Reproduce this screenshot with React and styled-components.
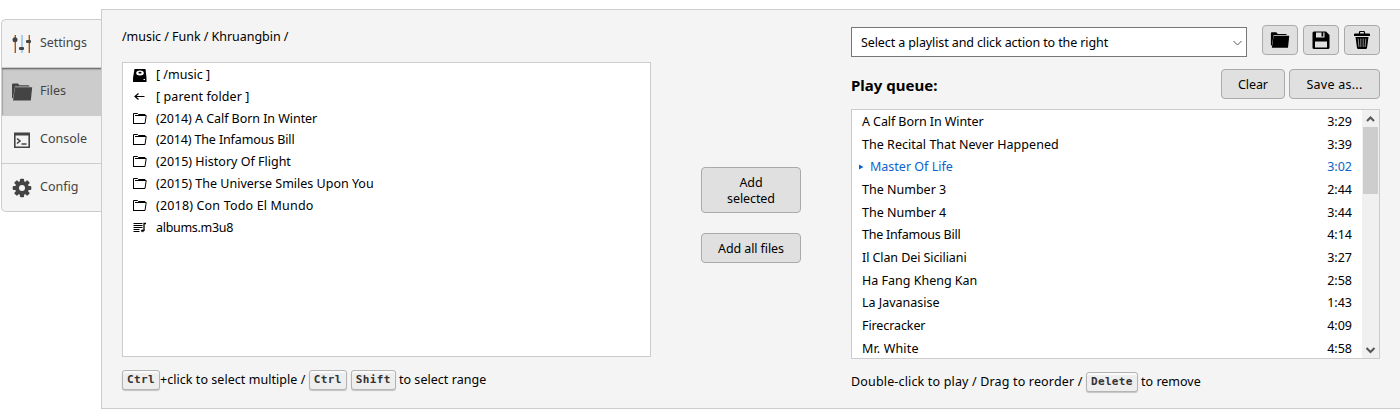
import React from "react";
import styled, { createGlobalStyle } from "styled-components";

const Global = createGlobalStyle`
  * { box-sizing: border-box; }
  body { margin: 0; background: #fff; color: #000; font: 12.5px/20px "Noto Sans", sans-serif; overflow: hidden; }
  svg { display: block; flex: none; }
`;
const Page = styled.div`display: flex; width: 1400px; height: 420px; padding: 9px 0 0 1px; overflow: hidden;`;
const Tabs = styled.nav`
  flex: none; width: 100px; height: 193px; margin-top: 10px;
  border: 1px solid #ccc; border-right: 0; border-radius: 5px 0 0 5px; background: #f4f4f4;
`;
const Tab = styled.div`
  display: flex; align-items: center; height: 48px; padding: 0 0 1px 9px; color: #444;
  border-bottom: 1px solid ${p => (p.$last ? "transparent" : "#ccc")};
  ${p => p.$active && "background: #ccc; box-shadow: inset 1px 2px 2px -1px #555;"}
  svg { margin-top: 2px; }
  span { margin-left: 7px; letter-spacing: ${p => p.$ls || 0}px; }
`;
const Panel = styled.main`
  flex: none; width: 1310px; height: 400px; border: 1px solid #ccc; background: #f4f4f4;
  display: flex; align-items: flex-start; padding-left: 20px;
`;
const Files = styled.section`width: 529px; padding-top: 17px;`;
const Crumbs = styled.div`height: 20px; letter-spacing: -0.04px;`;
const FileList = styled.div`height: 295px; margin-top: 15px; border: 1px solid #ccc; background: #fff; padding: 1px 0 0 9px;`;
const FileRow = styled.div`
  display: flex; align-items: center; height: 21.85px;
  span { margin-left: 8px; letter-spacing: ${p => p.$ls || 0}px; }
`;
const Hint = styled.div`display: flex; align-items: center; margin-top: 13px; height: 20px; white-space: pre;`;
const HintText = styled.span`margin-top: -1px; letter-spacing: ${p => p.$ls || 0}px;`;
const Kbd = styled.kbd`
  height: 20px; padding: 0 4px; margin-right: ${p => p.$gap || 0}px;
  border: 1px solid #b4b4b4; border-radius: 3px; background: #eee; color: #333;
  box-shadow: 0 1px 1px rgba(0,0,0,.2), inset 0 2px 0 rgba(255,255,255,.7);
  font: bold 11px/18px "DejaVu Sans Mono", monospace; letter-spacing: 0.36px;
`;
const Actions = styled.section`
  width: 100px; margin: 157px 50px 0; display: flex; flex-direction: column; gap: 20px;
`;
const Button = styled.button`
  display: flex; align-items: center; justify-content: center; flex: none;
  width: ${p => p.$w}px; height: ${p => p.$h || 30}px; padding: 2px 0 0;
  border: 1px solid #aaa; border-radius: 4px; background: #e0e0e0; color: #000;
  font: 12.5px/16px "Noto Sans", sans-serif; letter-spacing: ${p => p.$ls || 0}px;
  svg { margin-top: -2px; }
`;
const Queue = styled.section`width: 529px; padding-top: 15px;`;
const Row = styled.div`display: flex;`;
const Select = styled.div`
  display: flex; align-items: center; justify-content: space-between; width: 396px; height: 30px; margin: 2px 15px 0 0;
  border: 1px solid #777; background: #fff; padding: 0 3px 0 9px;
  span { margin-top: 2px; letter-spacing: -0.11px; }
`;
const Tools = styled.div`display: flex; gap: ${p => p.$gap}px;`;
const Head = styled.div`display: flex; justify-content: space-between; margin-top: 12px;`;
const Title = styled.h2`margin: 6px 0 0; font: bold 15px/20px "Noto Sans", sans-serif;`;
const QueueBox = styled.div`display: flex; height: 250px; margin-top: 10px; border: 1px solid #ccc; background: #fff; overflow: hidden;`;
const Tracks = styled.div`flex: 1; padding-top: 0.6px;`;
const Track = styled.div`
  display: flex; align-items: center; height: 22.7px; padding: 0 10px 0 ${p => (p.$on ? 7 : 10)}px;
  color: ${p => (p.$on ? "#0b63ce" : "#000")};
  span { flex: 1; letter-spacing: ${p => p.$ls || 0}px; }
  svg { margin-right: 6px; }
`;
const Scroll = styled.div`
  width: 17px; background: #f0f0f0; display: flex; flex-direction: column; align-items: center; justify-content: space-between;
`;
const ScrollTop = styled.div`display: flex; flex-direction: column; align-items: center;`;
const Thumb = styled.div`width: 15px; height: 67px; background: #cdcdcd;`;

const Sliders = () => (
  <svg width="22" height="22" viewBox="0 0 22 22">
    <path d="M3 2h1v18H3zM17 2h1v18h-1z" fill="#e0b48f" /><path d="M10 2h2v18h-2z" fill="#a9cbec" />
    <path d="M4 2h1v18H4zM18 2h1v18h-1z" fill="#666" />
    <g fill="#444"><circle cx="4" cy="6.800" r="2.500" /><rect x="8" y="14" width="5" height="3" rx="1" /><rect x="15" y="7" width="5" height="3" rx="1" /></g>
  </svg>
);
const Folder = ({ c = "#000", w = 22 }) => (
  <svg width={w} height={w} viewBox="0 0 22 22" fill={c}>
    <path d="M1 17V3.500Q1 2.500 2 2.500H7l1.500 1.800h8.500Q18.500 4.300 18.500 5.500H4L2 17z" /><path d="M4 6.200H21.200L19.800 19.500H2z" />
  </svg>
);
const Console = () => (
  <svg width="22" height="22" viewBox="0 0 22 22" fill="none" stroke="#444">
    <path d="M3.800 4v14.300h14.400V4" strokeWidth="1.600" /><path d="M3 5h16" strokeWidth="3" />
    <path d="M6 9.500l3 2.500-3 2.500M10.500 15h5" strokeWidth="1.600" />
  </svg>
);
const Gear = () => (
  <svg width="22" height="22" viewBox="-11 -11 22 22">
    <g fill="#444">{[0, 45, 90, 135].map(a => <rect key={a} x="-2.100" y="-9.300" width="4.200" height="18.600" rx="1" transform={`rotate(${a})`} />)}</g>
    <circle r="5" fill="none" stroke="#444" strokeWidth="3.800" /><circle r="3" fill="#f4f4f4" />
  </svg>
);
const Disk = () => (
  <svg width="16" height="16" viewBox="0 0 16 16"><path d="M2.500 2h11l1 9v4H1v-4z" /><ellipse cx="8" cy="6" rx="3.800" ry="2.500" fill="#fff" /><ellipse cx="8" cy="5.700" rx="1.600" ry=".9" /><path d="M11.500 12.500h1.500" stroke="#fff" /></svg>
);
const Back = () => (
  <svg width="16" height="16" viewBox="0 0 16 16" fill="none" stroke="#000" strokeWidth="1.200"><path d="M3 7.500h9.500M6.500 4.500l-3.500 3 3.500 3" /></svg>
);
const Open = () => (
  <svg width="16" height="16" viewBox="0 0 16 16" fill="none" stroke="#000"><path d="M1.500 13V2.500H5.500L6.500 3.500h6.500V5M1.500 12.500h11.500l1.200-8H3" /></svg>
);
const ListIcon = () => (
  <svg width="16" height="16" viewBox="0 0 16 16" fill="none" stroke="#000"><path d="M1.500 3.500h9M1.500 5.500h9M1.500 7.500h9M1.500 9.500h6M1.500 11.500h6" /><path d="M14 3.500h-2v7.500" strokeWidth="1.300" /><ellipse cx="10.500" cy="10.800" rx="1.300" ry="1" fill="#000" strokeWidth=".5" /></svg>
);
const Save = () => (
  <svg width="20" height="20" viewBox="0 0 20 20"><path d="M1.500 3Q1.500 1.500 3 1.500H15L18.500 5v12.500q0 1.500-1.500 1.500H3q-1.500 0-1.500-1.500z" /><path d="M5 2.500h8.500v5H5zM4 11.500H16v6H4z" fill="#e0e0e0" /><path d="M10.500 2h1.800v4.500h-1.800z" /></svg>
);
const Trash = () => (
  <svg width="20" height="20" viewBox="0 0 20 20"><path d="M2 4.500q0-1 1-1h14q1 0 1 1V6H2zM3.500 7h13l-1.500 11q-.2 1-1.200 1H6.200q-1 0-1.200-1z" /><path d="M7.500 4V2.300q0-.8.800-.8h3.400q.8 0 .8.800V4" fill="none" stroke="#000" strokeWidth="1.200" /><path d="M6.200 8.500l.7 8.500M8.800 8.500V17M11.200 8.500V17M13.800 8.500L13.100 17" stroke="#999" strokeWidth=".9" /></svg>
);
const Chevron = ({ up, w = 1, c = "#555" }) => (
  <svg width="11" height="17" viewBox="0 0 11 17" fill="none" stroke={c} strokeWidth={w}><path d={up ? "M2 11L5.500 7.500 9 11" : "M1.500 7L5.500 11 9.500 7"} /></svg>
);

const files = [
  [Disk, "[ /music ]"], [Back, "[ parent folder ]", 0.1], [Open, "(2014) A Calf Born In Winter", -0.05], [Open, "(2014) The Infamous Bill", -0.13],
  [Open, "(2015) History Of Flight"], [Open, "(2015) The Universe Smiles Upon You"], [Open, "(2018) Con Todo El Mundo", 0.17], [ListIcon, "albums.m3u8", -0.3],
];
const tracks = [
  ["A Calf Born In Winter", "3:29", -0.08], ["The Recital That Never Happened", "3:39", 0.03], ["Master Of Life", "3:02"], ["The Number 3", "2:44"],
  ["The Number 4", "3:44"], ["The Infamous Bill", "4:14", -0.22], ["Il Clan Dei Siciliani", "3:27", -0.08], ["Ha Fang Kheng Kan", "2:58"],
  ["La Javanasise", "1:43"], ["Firecracker", "4:09", -0.1], ["Mr. White", "4:58", 0.15],
];

export default function App() {
  return (
    <>
      <Global />
      <Page>
        <Tabs>
          <Tab $ls={-0.1}><Sliders /><span>Settings</span></Tab>
          <Tab $active><Folder c="#444" /><span>Files</span></Tab>
          <Tab><Console /><span>Console</span></Tab>
          <Tab $last><Gear /><span>Config</span></Tab>
        </Tabs>
        <Panel>
          <Files>
            <Crumbs>/music / Funk / Khruangbin /</Crumbs>
            <FileList>
              {files.map(([Icon, name, ls]) => <FileRow key={name} $ls={ls}><Icon /><span>{name}</span></FileRow>)}
            </FileList>
            <Hint>
              <Kbd>Ctrl</Kbd><HintText $ls={0.05}>+click to select multiple / </HintText>
              <Kbd $gap={4}>Ctrl</Kbd><Kbd>Shift</Kbd><HintText $ls={0.04}> to select range</HintText>
            </Hint>
          </Files>
          <Actions>
            <Button $w={100} $h={46} $ls={-0.1}>Add<br />selected</Button>
            <Button $w={100} $ls={-0.1}>Add all files</Button>
          </Actions>
          <Queue>
            <Row>
              <Select><span>Select a playlist and click action to the right</span><Chevron /></Select>
              <Tools $gap={5}>
                <Button $w={36}><Folder w={20} /></Button>
                <Button $w={36}><Save /></Button>
                <Button $w={36}><Trash /></Button>
              </Tools>
            </Row>
            <Head>
              <Title>Play queue:</Title>
              <Tools $gap={4}>
                <Button $w={64} $ls={-0.1}>Clear</Button>
                <Button $w={91} $ls={0.25}>Save as...</Button>
              </Tools>
            </Head>
            <QueueBox>
              <Tracks>
                {tracks.map(([name, time, ls], i) => (
                  <Track key={name} $on={i === 2} $ls={ls}>
                    {i === 2 && <svg width="5" height="6" viewBox="0 0 5 6" fill="currentColor"><path d="M0 .5l4.500 2.500L0 5.500z" /></svg>}
                    <span>{name}</span>{time}
                  </Track>
                ))}
              </Tracks>
              <Scroll>
                <ScrollTop><Chevron up w={2} /><Thumb /></ScrollTop>
                <Chevron w={2} />
              </Scroll>
            </QueueBox>
            <Hint><HintText $ls={0.16}>Double-click to play / Drag to reorder / </HintText><Kbd>Delete</Kbd><HintText> to remove</HintText></Hint>
          </Queue>
        </Panel>
      </Page>
    </>
  );
}
